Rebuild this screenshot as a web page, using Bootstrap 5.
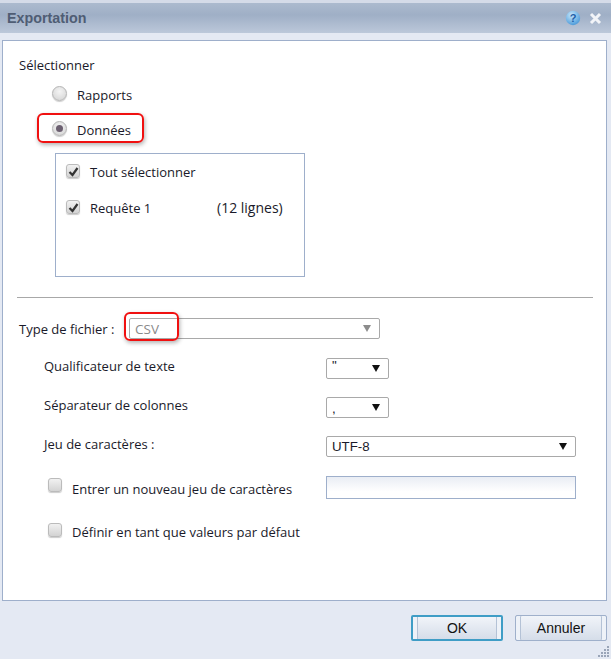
<!DOCTYPE html>
<html lang="fr"><head><meta charset="utf-8"><title>Exportation</title>
<link href="https://cdn.jsdelivr.net/npm/bootstrap@5.3.0/dist/css/bootstrap.min.css" rel="stylesheet">
<style>
html,body{height:659px;overflow:hidden}
body{width:611px;background:#e4e9f3;font-family:Tahoma,"Open Sans","Liberation Sans",sans-serif;font-size:13px;color:#1a1a2a;position:relative}
.dlg-title{height:33px;border-top:3px solid #d5dbe8;background:linear-gradient(#acbace,#9fafc6 40%,#bcc8da);padding:0 9px 0 7px}
.dlg-name{font-family:"Liberation Sans",sans-serif;font-weight:700;font-size:14.3px;color:#4f5d74;margin-top:2px}
.dlg-panel{margin:7px 4px 0 2px;width:605px;height:561px;background:#fff;border:1px solid #9eafcb;padding:15px 13px 0 14px;flex:none}
.row-h{line-height:18px}
.pad-l{margin-left:35px}
.fake-radio{width:15px;height:15px;border-radius:50%;border:1px solid #b4b4b4;background:radial-gradient(circle at 50% 35%,#f4f4f4,#d2d2d2);box-shadow:0 1px 1px #ccc;flex:none;display:flex;align-items:center;justify-content:center;margin-bottom:4px}
.fake-radio i{width:7px;height:7px;border-radius:50%;background:#6b5f70;display:block}
.fake-check{width:14px;height:14px;border-radius:3px;border:1px solid #bbb;background:linear-gradient(#f1f1f1,#d3d3d3);box-shadow:0 1px 1px #ccc;flex:none;display:flex;align-items:center;justify-content:center;margin-bottom:2px}
.check-up{margin-bottom:5px}
.sel-box{margin:9px 0 0 38px;width:250px;height:124px;border:1px solid #9eafcb;padding:9px 10px 0 10px}
.sep-line{margin:20px 0 0 0;width:576px;height:1px;background:#a8a8a8}
.opt-row{height:21px;margin-top:18px}
.fake-sel{height:21px;border:1px solid #a9a9a9;border-radius:2px;background:#fff;padding:0 5px 0 5px;display:flex;align-items:center;justify-content:space-between;font-family:"Liberation Sans",sans-serif;font-size:13.3px}
.sel-off{width:251px;color:#8a8a8a}
.sel-off>span:first-child{font-family:"Open Sans",sans-serif;font-size:13.5px;padding-top:1px}
.sel-s{width:63px}
.sel-l{width:250px}
.arrow{width:0;height:0;border-left:4px solid transparent;border-right:4px solid transparent;border-top:7px solid #111;margin-right:3px}
.sel-off .arrow{border-top-color:#8c8c8c}
.q-mark{margin-bottom:5px}
.c-mark{margin-top:2px}
.fake-input{width:250px;height:23px;border:1px solid #9eafcb;background:linear-gradient(#e9edf4,#fff 70%);flex:none}
.lab-col{width:309px;flex:none;padding-left:27px;padding-bottom:3px}
.lab-opt{padding-left:31px;padding-bottom:0;gap:10px}
.dlg-btn{width:92px;height:26px;border:1px solid #9fb0cb;border-radius:2px;background:linear-gradient(#f1f4f9,#d5dde9);box-shadow:inset 4px 0 0 #eef2f8,inset 5px 0 0 #b4c2d6,inset -4px 0 0 #eef2f8,inset -5px 0 0 #b4c2d6;font-family:"Liberation Sans",sans-serif;font-size:14px;color:#111;padding:0;line-height:24px}
.dlg-btn.is-main{border:2px solid #3f9dc6;line-height:22px}
.dlg-foot{margin-top:14px;padding-right:4px;gap:12px}
.hi-box{position:absolute;border:2px solid #f01010;border-radius:6px;box-shadow:1px 2px 4px rgba(0,0,0,.3);background:transparent}
.hi-a{left:37px;top:113px;width:107px;height:30px}
.hi-b{left:124px;top:312px;width:55px;height:29px}
.grip{position:absolute;right:1px;bottom:1px}
.txt-select{margin-left:2px}
.type-lab{width:110px;flex:none;padding-top:2px}
.count-txt{font-size:14px}
.req-txt{width:117px}
</style></head>
<body>
<div class="dlg-title d-flex align-items-center justify-content-between">
  <span class="dlg-name">Exportation</span>
  <span class="d-flex align-items-center gap-2">
    <svg width="16" height="16" viewBox="0 0 16 16"><defs><radialGradient id="g" cx=".4" cy=".3" r=".8"><stop offset="0" stop-color="#c6e6fa"/><stop offset="1" stop-color="#3e92d6"/></radialGradient></defs><circle cx="8" cy="8" r="7.2" fill="url(#g)"/><text x="8" y="12" text-anchor="middle" font-family="Liberation Sans" font-weight="700" font-size="11" fill="#1e5fa8">?</text></svg>
    <svg width="13" height="13" viewBox="0 0 13 13"><path d="M2 2l9 9M11 2l-9 9" stroke="#f2f4f8" stroke-width="3"/></svg>
  </span>
</div>
<div class="dlg-panel">
  <div class="row-h txt-select">Sélectionner</div>
  <div class="d-flex align-items-center pad-l row-h" style="height:28px;margin-top:7px;gap:10px"><span class="fake-radio"></span><span>Rapports</span></div>
  <div class="d-flex align-items-center pad-l row-h" style="height:28px;margin-top:7px;gap:10px"><span class="fake-radio"><i></i></span><span>Données</span></div>
  <div class="sel-box">
    <div class="d-flex align-items-center row-h" style="gap:10px"><span class="fake-check"><svg width="11" height="11" viewBox="0 0 11 11"><path d="M1.5 6l3 3 5-7" fill="none" stroke="#333" stroke-width="2.2"/></svg></span><span>Tout sélectionner</span></div>
    <div class="d-flex align-items-center row-h" style="margin-top:18px;gap:10px"><span class="fake-check"><svg width="11" height="11" viewBox="0 0 11 11"><path d="M1.5 6l3 3 5-7" fill="none" stroke="#333" stroke-width="2.2"/></svg></span><span class="req-txt">Requête 1</span><span class="count-txt">(12 lignes)</span></div>
  </div>
  <div class="sep-line"></div>
  <div class="d-flex align-items-center opt-row" style="margin-top:20px;margin-left:2px"><span class="type-lab">Type de fichier :</span><div class="fake-sel sel-off"><span>CSV</span><span class="arrow"></span></div></div>
  <div class="d-flex align-items-center opt-row" style="margin-top:19px"><span class="lab-col">Qualificateur de texte</span><div class="fake-sel sel-s"><span class="q-mark">"</span><span class="arrow"></span></div></div>
  <div class="d-flex align-items-center opt-row"><span class="lab-col">Séparateur de colonnes</span><div class="fake-sel sel-s"><span class="c-mark">,</span><span class="arrow"></span></div></div>
  <div class="d-flex align-items-center opt-row"><span class="lab-col">Jeu de caractères :</span><div class="fake-sel sel-l"><span>UTF-8</span><span class="arrow"></span></div></div>
  <div class="d-flex align-items-center" style="height:23px;margin-top:19px"><span class="lab-col d-flex align-items-center lab-opt"><span class="fake-check check-up"></span><span class="pt-1">Entrer un nouveau jeu de caractères</span></span><div class="fake-input"></div></div>
  <div class="d-flex align-items-center" style="margin-top:24px;margin-left:31px;gap:10px"><span class="fake-check check-up"></span><span>Définir en tant que valeurs par défaut</span></div>
</div>
<div class="d-flex justify-content-end dlg-foot">
  <button type="button" class="dlg-btn is-main">OK</button>
  <button type="button" class="dlg-btn">Annuler</button>
</div>
<div class="hi-box hi-a"></div>
<div class="hi-box hi-b"></div>
<svg class="grip" width="13" height="13" viewBox="0 0 13 13" fill="#9aa5b8"><rect x="10" y="1" width="2" height="2"/><rect x="7" y="4" width="2" height="2"/><rect x="10" y="4" width="2" height="2"/><rect x="4" y="7" width="2" height="2"/><rect x="7" y="7" width="2" height="2"/><rect x="10" y="7" width="2" height="2"/><rect x="1" y="10" width="2" height="2"/><rect x="4" y="10" width="2" height="2"/><rect x="7" y="10" width="2" height="2"/><rect x="10" y="10" width="2" height="2"/></svg>
</body></html>
